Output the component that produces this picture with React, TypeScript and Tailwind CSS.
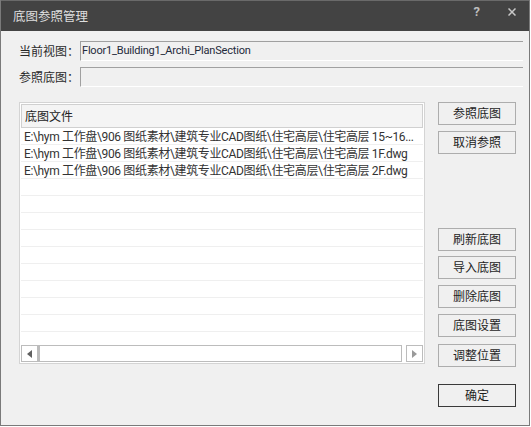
const rows = [
  'E:\\hym 工作盘\\906 图纸素材\\建筑专业CAD图纸\\住宅高层\\住宅高层 15~16...',
  'E:\\hym 工作盘\\906 图纸素材\\建筑专业CAD图纸\\住宅高层\\住宅高层 1F.dwg',
  'E:\\hym 工作盘\\906 图纸素材\\建筑专业CAD图纸\\住宅高层\\住宅高层 2F.dwg',
]

const font = { fontFamily: 'Roboto, "Noto Sans CJK SC", sans-serif' }

function Btn({ label, cls = '', dark = false }: { label: string; cls?: string; dark?: boolean }) {
  return (
    <button
      className={`h-[23px] w-[78px] bg-[#f0f0f0] text-[12px] leading-none text-[#1e1e1e] border ${
        dark ? 'border-[#3a3a3a]' : 'border-[#adadad]'
      } ${cls}`}
    >
      {label}
    </button>
  )
}

export default function App() {
  return (
    <div
      className="w-[530px] h-[426px] bg-[#f0f0f0] border-x border-b border-[#7a7a7a] flex flex-col"
      style={font}
    >
      <div className="h-[31px] shrink-0 bg-[#434343] border-t border-[#6a6a6a] flex items-center pl-[12px] pr-[13px] text-[#dedede]">
        <span className="text-[12.5px] pt-[2px]">底图参照管理</span>
        <div className="flex-1" />
        <span className="text-[13px] font-bold text-[#bdbdbd] mr-[28px] -mt-[9px]">?</span>
        <svg width="8" height="8" viewBox="0 0 8 8" className="-mt-[8px]">
          <path d="M0.5 0.5L7.5 7.5M7.5 0.5L0.5 7.5" stroke="#c8c8c8" strokeWidth="1.5" />
        </svg>
      </div>

      <div className="flex items-center mt-[10px] pl-[18px]">
        <span className="w-[61px] text-[12px] text-[#2a2a2a] pt-px">当前视图：</span>
        <div className="w-[443px] h-[20px] border-t border-l border-b border-[#a0a0a0] border-b-white flex items-center pl-px text-[11px] tracking-[-0.2px] text-[#1f2a3a]">
          Floor1_Building1_Archi_PlanSection
        </div>
      </div>
      <div className="flex items-center mt-[6px] pl-[18px]">
        <span className="w-[61px] text-[12px] text-[#2a2a2a] pt-px">参照底图：</span>
        <div className="w-[443px] h-[20px] border-t border-l border-b border-[#a0a0a0] border-b-white" />
      </div>

      <div className="flex mt-[15px] pl-[18px]">
        <div className="w-[406px] h-[262px] border border-[#d4d4d4] bg-white p-px flex flex-col">
          <div className="h-[24px] shrink-0 border border-[#d0d0d0] bg-[#f4f4f4] flex items-center pl-[3px] pt-[2px] text-[12px] text-[#222]">
            底图文件
          </div>
          <div className="h-[218px] overflow-hidden">
            {Array.from({ length: 13 }).map((_, i) => (
              <div
                key={i}
                className="h-[17px] border-b border-[#efefef] pl-[3px] pt-[2px] flex items-center text-[12px] tracking-[-0.35px] text-[#333] whitespace-nowrap overflow-hidden"
              >
                {rows[i] ?? ''}
              </div>
            ))}
          </div>
          <div className="h-[17px] flex">
            <div className="w-[17px] border border-[#bcbcbc] flex items-center justify-center">
              <svg width="5" height="8" viewBox="0 0 5 8">
                <path d="M5 0L0 4L5 8Z" fill="#606060" />
              </svg>
            </div>
            <div className="flex-1 border border-l-2 border-[#bcbcbc]" />
            <div className="w-[4px]" />
            <div className="w-[17px] border border-[#bcbcbc] flex items-center justify-center">
              <svg width="5" height="8" viewBox="0 0 5 8">
                <path d="M0 0L5 4L0 8Z" fill="#9a9a9a" />
              </svg>
            </div>
          </div>
        </div>

        <div className="ml-[13px] flex flex-col">
          <Btn label="参照底图" />
          <Btn label="取消参照" cls="mt-[6px]" />
          <Btn label="刷新底图" cls="mt-[74px]" />
          <Btn label="导入底图" cls="mt-[5px]" />
          <Btn label="删除底图" cls="mt-[6px]" />
          <Btn label="底图设置" cls="mt-[6px]" />
          <Btn label="调整位置" cls="mt-[7px]" />
          <Btn label="确定" cls="mt-[17px]" dark />
        </div>
      </div>
    </div>
  )
}
